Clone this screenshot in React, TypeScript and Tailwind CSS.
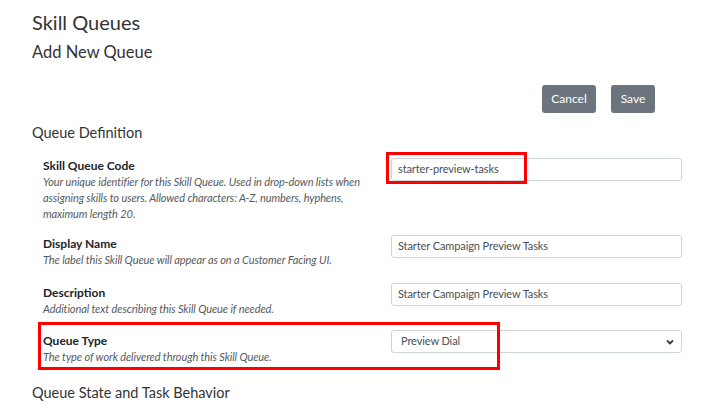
import React from "react";

const font = { fontFamily: '"Source Sans Pro", Lato, "Noto Sans", sans-serif' };

function Row({
  label,
  desc,
  children,
  className = "",
}: {
  label: string;
  desc: React.ReactNode;
  children: React.ReactNode;
  className?: string;
}) {
  return (
    <div className={`flex items-start ${className}`}>
      <div className="w-[359px] shrink-0 whitespace-nowrap pl-[11px]">
        <div className="text-[12px] font-bold leading-[16px] text-[#212529]">{label}</div>
        <div className="text-[11px] italic leading-[16px] tracking-[-0.1px] text-[#555b61]">{desc}</div>
      </div>
      {children}
    </div>
  );
}

function Input({ value }: { value: string }) {
  return (
    <div className="flex h-[23px] w-[291px] items-center rounded-[3px] border border-[#ced4da] bg-white px-[6px] text-[11px] tracking-[-0.1px] text-[#495057]">
      {value}
    </div>
  );
}

export default function App() {
  return (
    <div className="h-[420px] w-[721px] overflow-hidden bg-white px-8 text-[#333]" style={font}>
      <h1 className="pt-[8px] text-[20px] leading-[28px] text-[#333]">Skill Queues</h1>
      <h2 className="mt-[5px] text-[16.5px] leading-[22px] text-[#333]">Add New Queue</h2>
      <div className="mt-[22px] flex justify-end gap-[15px] pr-[34px]">
        <button className="h-[28px] w-[54px] rounded-[3px] bg-[#6c757d] text-[12px] text-white">Cancel</button>
        <button className="h-[28px] w-[44px] rounded-[3px] bg-[#6c757d] text-[12px] text-white">Save</button>
      </div>
      <h3 className="mt-[10px] text-[14.5px] leading-[20px] text-[#333]">Queue Definition</h3>

      <Row
        className="mt-[15px]"
        label="Skill Queue Code"
        desc={
          <>
            Your unique identifier for this Skill Queue. Used in drop-down lists when
            <br />
            assigning skills to users. Allowed characters: A-Z, numbers, hyphens,
            <br />
            maximum length 20.
          </>
        }
      >
        <div className="relative">
          <Input value="starter-preview-tasks" />
          <div className="absolute left-[-5px] top-[-6px] h-[32px] w-[141px] border-[3px] border-[#f00]" />
        </div>
      </Row>

      <Row
        className="mt-[14px]"
        label="Display Name"
        desc="The label this Skill Queue will appear as on a Customer Facing UI."
      >
        <div className="mt-[-1px]">
          <Input value="Starter Campaign Preview Tasks" />
        </div>
      </Row>

      <Row
        className="mt-[17px]"
        label="Description"
        desc="Additional text describing this Skill Queue if needed."
      >
        <div className="mt-[-2px]">
          <Input value="Starter Campaign Preview Tasks" />
        </div>
      </Row>

      <div className="relative mt-[16px]">
        <Row label="Queue Type" desc="The type of work delivered through this Skill Queue.">
          <div className="mt-[-3px]">
            <div className="flex h-[23px] w-[291px] items-center justify-between rounded-[3px] border border-[#ced4da] bg-white pl-[9px] pr-[6px] text-[11px] tracking-[-0.1px] text-[#495057]">
              <span>Preview Dial</span>
              <svg width="10" height="8" viewBox="0 0 10 8">
                <path d="M2 2.5 L5 5.5 L8 2.5" fill="none" stroke="#343a40" strokeWidth="1.8" />
              </svg>
            </div>
          </div>
        </Row>
        <div className="absolute left-[6px] top-[-11px] h-[48px] w-[462px] border-[3px] border-[#f00]" />
      </div>

      <h3 className="mt-[18px] text-[14.5px] leading-[20px] text-[#333]">Queue State and Task Behavior</h3>
    </div>
  );
}
